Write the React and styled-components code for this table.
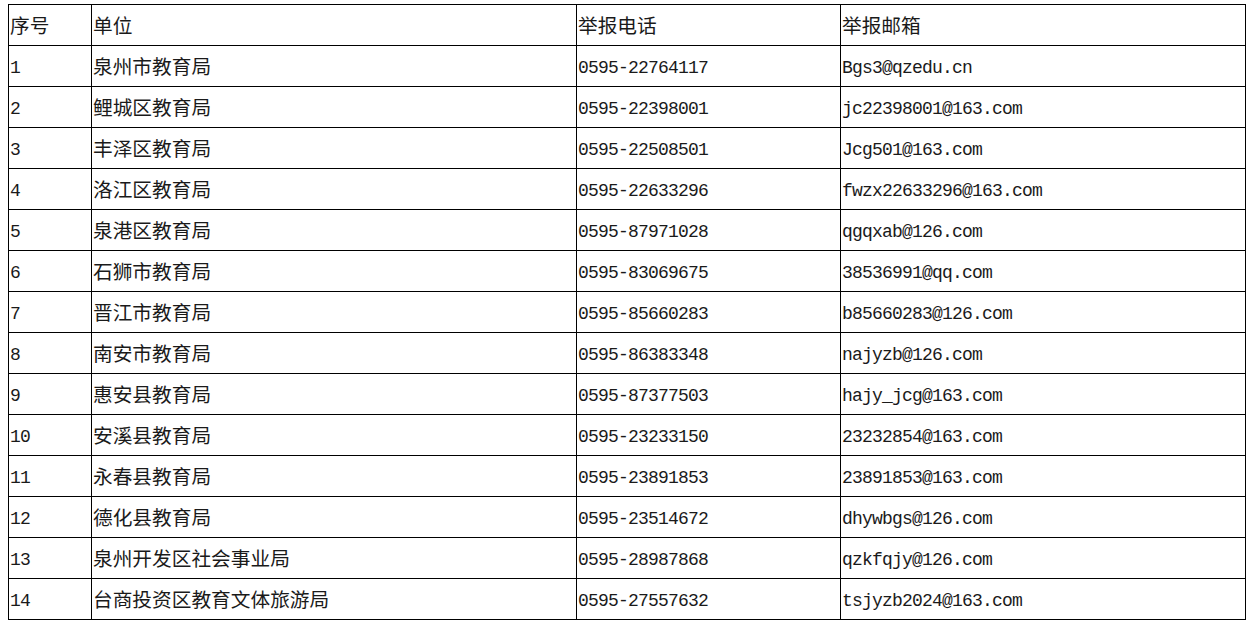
import styled, { createGlobalStyle } from "styled-components";

const GlobalStyle = createGlobalStyle`
  body {
    margin: 4px 0 0 8px;
    background: #fff;
    color: #000;
  }
`;

const Table = styled.table`
  border-collapse: collapse;
  table-layout: fixed;
  width: 1238px;
`;

const Col = styled.col`
  width: ${(p) => p.$w}px;
`;

const Row = styled.tr`
  height: 41px;
`;

const Cell = styled.td`
  box-sizing: border-box;
  padding: ${(p) => (p.$cjk ? "0 0 0 1px" : "3px 0 0 1px")};
  border: 1px solid #000;
  vertical-align: middle;
  white-space: nowrap;
  color: #1a1a1a;
  font-family: ${(p) =>
    p.$cjk
      ? `"Noto Sans CJK SC", sans-serif`
      : `"Liberation Mono", "Noto Sans CJK SC", monospace`};
  font-size: ${(p) => (p.$cjk ? "19.7px" : "18px")};
  letter-spacing: ${(p) => (p.$cjk ? "0" : "-0.8px")};
  line-height: 1;
`;

const rows = [
  ["1", "泉州市教育局", "0595-22764117", "Bgs3@qzedu.cn"],
  ["2", "鲤城区教育局", "0595-22398001", "jc22398001@163.com"],
  ["3", "丰泽区教育局", "0595-22508501", "Jcg501@163.com"],
  ["4", "洛江区教育局", "0595-22633296", "fwzx22633296@163.com"],
  ["5", "泉港区教育局", "0595-87971028", "qgqxab@126.com"],
  ["6", "石狮市教育局", "0595-83069675", "38536991@qq.com"],
  ["7", "晋江市教育局", "0595-85660283", "b85660283@126.com"],
  ["8", "南安市教育局", "0595-86383348", "najyzb@126.com"],
  ["9", "惠安县教育局", "0595-87377503", "hajy_jcg@163.com"],
  ["10", "安溪县教育局", "0595-23233150", "23232854@163.com"],
  ["11", "永春县教育局", "0595-23891853", "23891853@163.com"],
  ["12", "德化县教育局", "0595-23514672", "dhywbgs@126.com"],
  ["13", "泉州开发区社会事业局", "0595-28987868", "qzkfqjy@126.com"],
  ["14", "台商投资区教育文体旅游局", "0595-27557632", "tsjyzb2024@163.com"],
];

export default function App() {
  return (
    <>
      <GlobalStyle />
      <Table>
        <colgroup>
          <Col $w={83} />
          <Col $w={485} />
          <Col $w={264} />
          <Col $w={405} />
        </colgroup>
        <tbody>
          <Row>
            <Cell $cjk>序号</Cell>
            <Cell $cjk>单位</Cell>
            <Cell $cjk>举报电话</Cell>
            <Cell $cjk>举报邮箱</Cell>
          </Row>
          {rows.map(([no, unit, phone, mail]) => (
            <Row key={no}>
              <Cell>{no}</Cell>
              <Cell $cjk>{unit}</Cell>
              <Cell>{phone}</Cell>
              <Cell>{mail}</Cell>
            </Row>
          ))}
        </tbody>
      </Table>
    </>
  );
}
